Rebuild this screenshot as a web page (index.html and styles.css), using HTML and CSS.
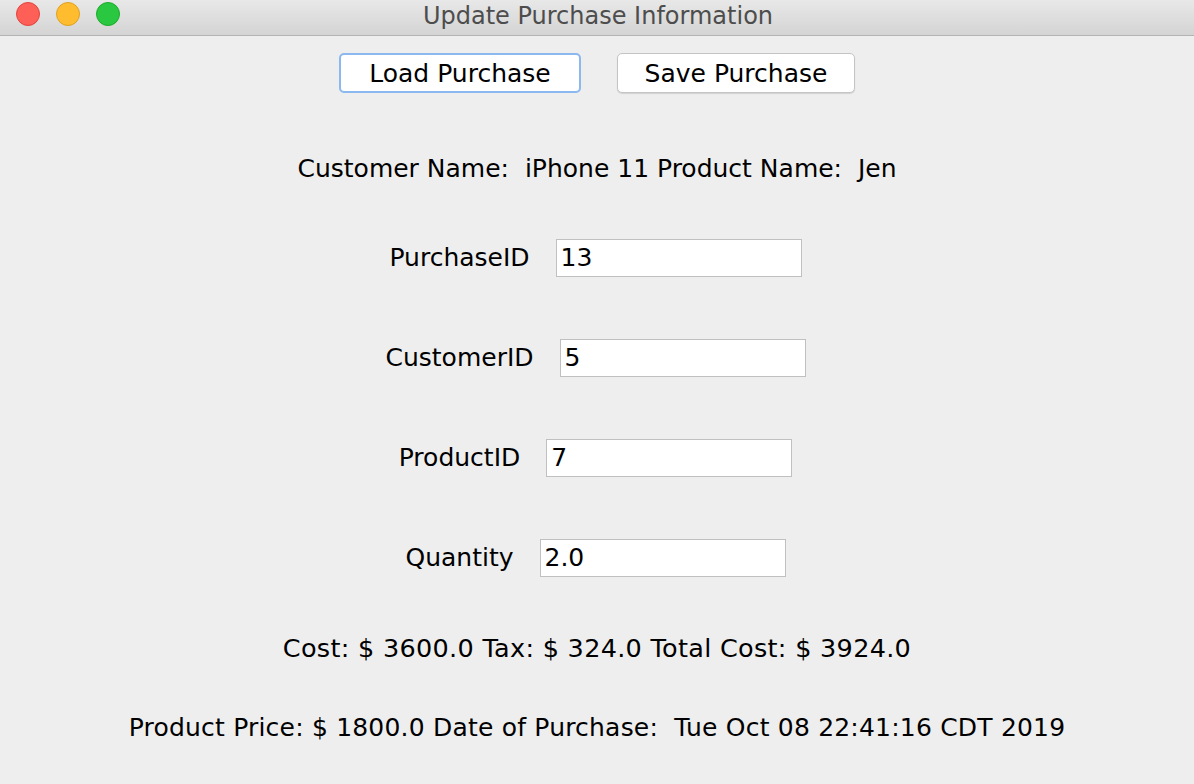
FILE: index.html
```html
<!DOCTYPE html>
<html>
<head>
<meta charset="utf-8">
<link rel="stylesheet" href="styles.css">
</head>
<body>
<div class="window">
  <div class="titlebar">
    <div class="lights">
      <span class="light red"></span>
      <span class="light yellow"></span>
      <span class="light green"></span>
    </div>
    <div class="title">Update Purchase Information</div>
  </div>
  <div class="content">
    <div class="row buttons">
      <button class="btn focused">Load Purchase</button>
      <button class="btn">Save Purchase</button>
    </div>
    <div class="row names">Customer Name:&nbsp; iPhone 11 Product Name:&nbsp; Jen</div>
    <div class="row field f1"><span class="label">PurchaseID</span><span class="input">13</span></div>
    <div class="row field"><span class="label">CustomerID</span><span class="input">5</span></div>
    <div class="row field"><span class="label">ProductID</span><span class="input">7</span></div>
    <div class="row field"><span class="label">Quantity</span><span class="input">2.0</span></div>
    <div class="row cost">Cost: $ 3600.0 Tax: $ 324.0 Total Cost: $ 3924.0</div>
    <div class="row price">Product Price: $ 1800.0 Date of Purchase:&nbsp; Tue Oct 08 22:41:16 CDT 2019</div>
  </div>
</div>
</body>
</html>
```

FILE: styles.css
```css
html, body {
  margin: 0;
  padding: 0;
}
body {
  width: 1194px;
  height: 784px;
  overflow: hidden;
  background: #eeeeee;
  font-family: "DejaVu Sans", "Liberation Sans", sans-serif;
  color: #000;
}
.window {
  width: 1194px;
  height: 784px;
  display: flex;
  flex-direction: column;
}
.titlebar {
  height: 35px;
  border-bottom: 1px solid #b3b3b3;
  background: linear-gradient(#e8e8e8, #d4d4d4);
  position: relative;
  display: flex;
  align-items: center;
  justify-content: center;
}
.lights {
  position: absolute;
  left: 16px;
  top: 2px;
  display: flex;
  gap: 16px;
}
.light {
  width: 24px;
  height: 24px;
  border-radius: 50%;
  box-sizing: border-box;
}
.red { background: #fe5f57; border: 1px solid #e0443e; }
.yellow { background: #febc2e; border: 1px solid #dea123; }
.green { background: #2ac840; border: 1px solid #1aab29; }
.title {
  font-size: 24px;
  line-height: 30px;
  color: #4d4d4d;
  margin-top: -4px;
  margin-left: 2px;
}
.content {
  display: flex;
  flex-direction: column;
  align-items: center;
}
.row {
  display: flex;
  align-items: center;
  justify-content: center;
  font-size: 25px;
  line-height: 30px;
}
.buttons {
  margin-top: 17px;
  gap: 36px;
}
.btn {
  font-family: inherit;
  font-size: 25px;
  height: 40px;
  background: #fff;
  border: 1px solid #c4c4c4;
  border-radius: 5px;
  box-shadow: 0 1px 1px rgba(0,0,0,0.12);
  color: #000;
  padding: 0;
}
.btn.focused {
  width: 242px;
  border: 2px solid #8ab8ef;
  box-shadow: none;
}
.btn:not(.focused) { width: 238px; }
.names {
  margin-top: 61px;
}
.field {
  gap: 26px;
  margin-top: 62px;
  margin-left: -3px;
}
.field.f1 { margin-top: 55px; }
.input {
  width: 246px;
  height: 38px;
  box-sizing: border-box;
  background: #fff;
  border: 1px solid #c0c0c0;
  display: flex;
  align-items: center;
  padding-left: 4px;
}
.cost {
  margin-top: 56px;
  font-size: 25.5px;
  letter-spacing: 0.3px;
}
.price {
  margin-top: 50px;
  font-size: 25px;
  letter-spacing: 0.2px;
}
```
